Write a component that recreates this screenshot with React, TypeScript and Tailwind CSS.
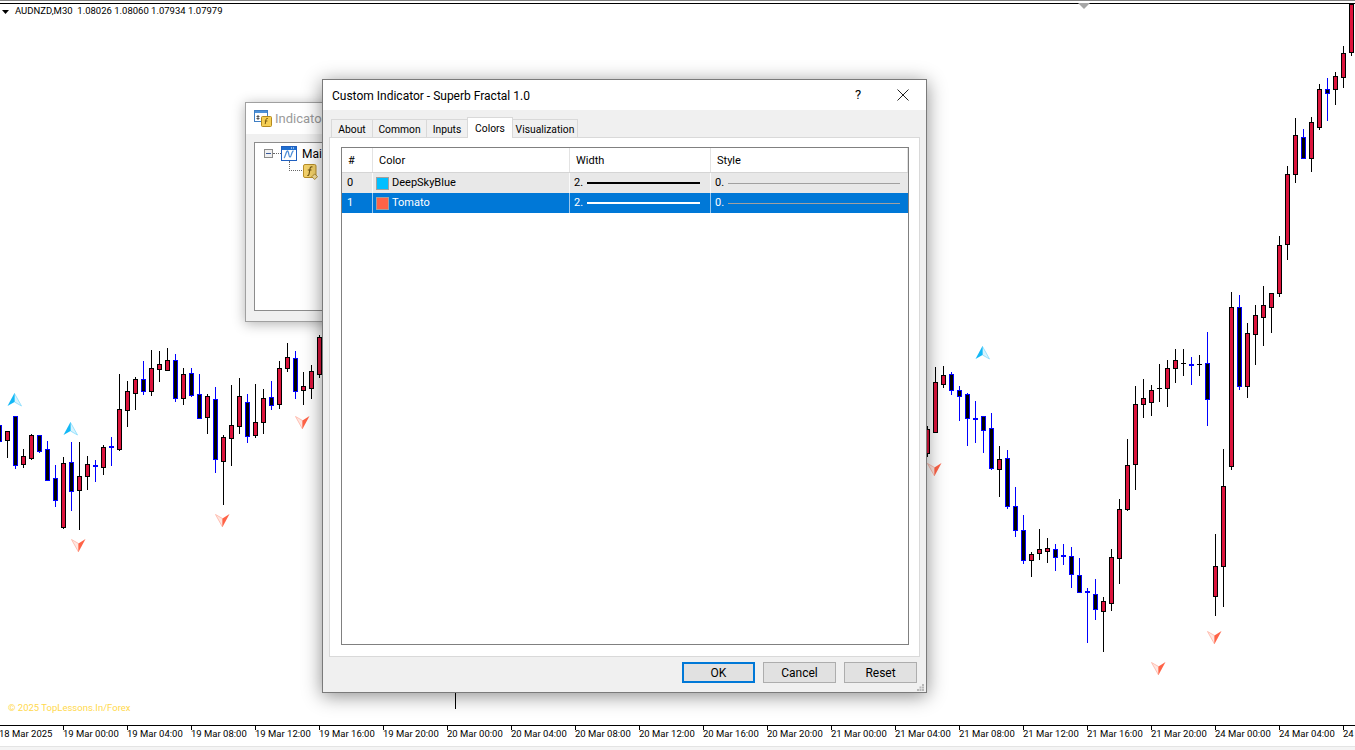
import { ReactNode } from "react";

type Kind = "r" | "b" | "k";
// kind, wick top, body top, body bottom, wick bottom (in 3x crop units, see addRun)
type Raw = [Kind, number, number, number, number];

interface Candle {
  kind: Kind;
  x: number;
  hi: number;
  top: number;
  bot: number;
  lo: number;
}

function addRun(startX: number, originY: number, rows: Raw[]): Candle[] {
  return rows.map(([kind, hi, top, bot, lo], i) => ({
    kind,
    x: startX + 8 * i,
    hi: Math.round(originY + hi / 3),
    top: Math.round(originY + top / 3),
    bot: Math.round(originY + bot / 3),
    lo: Math.round(originY + lo / 3),
  }));
}

const leftRun = addRun(-1, 330, [
  ["b", 285, 285, 332, 332],
  ["r", 303, 303, 329, 384],
  ["b", 258, 258, 404, 417],
  ["r", 357, 379, 401, 414],
  ["r", 312, 316, 383, 389],
  ["b", 316, 316, 362, 369],
  ["b", 333, 358, 449, 449],
  ["b", 405, 445, 509, 531],
  ["r", 381, 400, 590, 596],
  ["b", 336, 397, 482, 543],
  ["r", 336, 439, 479, 600],
  ["r", 378, 403, 437, 480],
  ["b", 390, 405, 413, 456],
  ["r", 346, 352, 410, 435],
  ["b", 321, 348, 356, 408],
  ["r", 132, 238, 356, 362],
  ["r", 153, 184, 239, 291],
  ["r", 141, 148, 188, 240],
  ["b", 93, 148, 182, 195],
  ["r", 60, 115, 182, 198],
  ["r", 63, 103, 116, 156],
  ["r", 54, 91, 119, 122],
  ["b", 72, 91, 203, 216],
  ["r", 114, 133, 203, 225],
  ["b", 114, 130, 194, 201],
  ["b", 132, 193, 263, 263],
  ["r", 193, 199, 260, 312],
  ["b", 171, 208, 386, 429],
  ["r", 316, 322, 392, 525],
  ["r", 165, 286, 323, 408],
  ["r", 144, 199, 287, 312],
  ["b", 192, 217, 317, 339],
  ["r", 162, 277, 314, 324],
  ["r", 177, 205, 275, 312],
  ["b", 153, 202, 224, 240],
  ["r", 93, 115, 223, 237],
  ["r", 39, 82, 113, 126],
  ["b", 63, 85, 182, 207],
  ["r", 126, 169, 179, 225],
  ["r", 105, 124, 173, 207],
  ["r", 15, 22, 131, 144],
]);

const midRun = addRun(927, 330, [
  ["r", 288, 298, 368, 380],
  ["r", 111, 157, 307, 307],
  ["r", 108, 136, 163, 173],
  ["b", 127, 133, 179, 194],
  ["b", 169, 181, 197, 272],
  ["b", 190, 193, 265, 347],
  ["b", 213, 265, 269, 339],
  ["b", 259, 259, 301, 369],
  ["b", 249, 295, 413, 419],
  ["r", 348, 388, 416, 500],
  ["b", 360, 385, 529, 536],
  ["b", 471, 529, 601, 620],
  ["b", 555, 601, 689, 701],
  ["r", 666, 673, 689, 740],
  ["r", 597, 658, 668, 690],
  ["r", 624, 655, 662, 698],
  ["b", 642, 658, 680, 722],
  ["b", 642, 676, 683, 705],
  ["b", 651, 679, 733, 773],
  ["b", 684, 736, 785, 789],
  ["b", 774, 784, 788, 938],
  ["b", 747, 793, 838, 869],
  ["r", 801, 814, 842, 965],
  ["r", 657, 682, 818, 842],
  ["r", 507, 538, 685, 761],
  ["r", 327, 406, 536, 542],
  ["r", 168, 223, 401, 479],
  ["r", 147, 205, 221, 263],
  ["r", 165, 181, 215, 257],
  ["k", 102, 175, 178, 215],
  ["r", 90, 115, 173, 230],
  ["r", 57, 91, 115, 158],
  ["k", 57, 99, 102, 137],
  ["b", 81, 102, 105, 165],
  ["k", 75, 102, 105, 137],
  ["b", 6, 100, 206, 287],
]);

const lowerRight = addRun(1215, 290, [
  ["r", 733, 829, 917, 977],
  ["r", 477, 589, 829, 950],
  ["r", 6, 52, 527, 539],
  ["b", 15, 52, 287, 300],
  ["r", 99, 130, 287, 323],
  ["r", 45, 76, 131, 224],
  ["r", -12, 46, 80, 167],
  ["r", 11, 8, 50, 128],
]);

const upperRight = addRun(1279, 0, [
  ["r", 708, 736, 878, 890],
  ["r", 498, 523, 731, 779],
  ["r", 354, 406, 523, 548],
  ["b", 387, 412, 473, 476],
  ["r", 351, 367, 475, 516],
  ["r", 252, 268, 380, 390],
  ["b", 234, 268, 278, 362],
  ["r", 216, 229, 266, 314],
  ["r", 138, 160, 230, 264],
  ["r", 12, 12, 157, 167],
]);

const candles: Candle[] = [
  ...leftRun,
  ...midRun,
  { kind: "k", x: 1199, hi: 355, top: 364, bot: 365, lo: 376 },
  ...lowerRight,
  ...upperRight,
  { kind: "k", x: 455, hi: 690, top: 690, bot: 690, lo: 709 },
];

const upArrows = [
  [7, 393],
  [63, 422],
  [975, 346],
];
const downArrows = [
  [71, 539],
  [215, 514],
  [295, 416],
  [927, 463],
  [1207, 631],
  [1151, 662],
];

const axisLabels = [
  "18 Mar 2025",
  ...["19", "20", "21"].flatMap((d) =>
    ["00:00", "04:00", "08:00", "12:00", "16:00", "20:00"].map((t) => `${d} Mar ${t}`),
  ),
  "24 Mar 00:00",
  "24 Mar 04:00",
  "24",
];

function CandleMark({ c }: { c: Candle }) {
  const line = c.kind === "r" || c.kind === "k" ? "#000000" : "#0000ff";
  const doji = c.bot - c.top <= 3;
  return (
    <g>
      <rect x={c.x} y={c.hi} width={1} height={Math.max(c.lo - c.hi, 1)} fill={line} />
      {doji && c.kind !== "r" ? (
        <rect x={c.x - 2} y={c.top} width={5} height={c.kind === "b" ? 2 : 1} fill={line} />
      ) : (
        <rect
          x={c.x - 1.5}
          y={c.top + 0.5}
          width={4}
          height={Math.max(c.bot - c.top, 1)}
          fill={c.kind === "r" ? "#dc143c" : "#000000"}
          stroke={line}
          strokeWidth={1}
        />
      )}
    </g>
  );
}

function Chart() {
  return (
    <svg width={1355} height={750} className="absolute left-0 top-0" shapeRendering="crispEdges">
      {candles.map((c, i) => (
        <CandleMark key={i} c={c} />
      ))}
      <g shapeRendering="auto">
        {upArrows.map(([x, y]) => (
          <g key={`${x}u`} transform={`translate(${x} ${y})`}>
            <polygon points="7.5,0.5 14.5,13 7.5,9" fill="#d9f4fe" stroke="#86dcfc" strokeWidth={0.8} />
            <polygon points="7.5,0 0.5,13 7.5,9" fill="#12b8f6" />
          </g>
        ))}
        {downArrows.map(([x, y]) => (
          <g key={`${x}d`} transform={`translate(${x} ${y})`}>
            <polygon points="0.5,0.5 7.5,13 7.5,4.5" fill="#ffe7e1" stroke="#ffb3a3" strokeWidth={0.8} />
            <polygon points="14.5,0 7.5,13 7.5,4.5" fill="#ff6347" />
          </g>
        ))}
      </g>
    </svg>
  );
}

function BackWindowIcon() {
  return (
    <svg width={18} height={17} viewBox="0 0 18 17">
      <rect x={0.5} y={0.5} width={13} height={11} fill="#fff" stroke="#3f7fc4" />
      <rect x={1} y={1} width={12} height={2} fill="#4f92d8" />
      <path d="M4 5v5M2.5 6.5h3M2.5 8.5h3" stroke="#555" strokeWidth={1} />
      <rect x={7.5} y={6.5} width={10} height={10} rx={1} fill="#f5cf55" stroke="#b58a1e" />
      <path d="M13.8 8.5c-1.4-.4-1.7.4-1.9 1.6l-.7 4M10.8 11h2.6" stroke="#7a5a10" strokeWidth={1} fill="none" />
    </svg>
  );
}

function MainChartIcon() {
  return (
    <svg width={17} height={15} viewBox="0 0 17 15">
      <rect x={0.5} y={0.5} width={15} height={14} fill="#fff" stroke="#1f5fbf" />
      <rect x={1} y={1} width={14} height={3} fill="#1f6fd0" />
      <path d="M10 2h1M12 2h1" stroke="#fff" />
      <path d="M3 12c1.500-1 2-7 3.500-7s1 6 2.500 6 1.500-6 3.500-6" stroke="#4f8fd8" strokeWidth={1.3} fill="none" />
    </svg>
  );
}

function FxIcon() {
  return (
    <svg width={15} height={16} viewBox="0 0 15 16">
      <rect x={0.5} y={0.5} width={12.500} height={13} rx={1.500} fill="#f4d26a" stroke="#b98f28" />
      <path d="M9.500 3c-1.800-.6-2.300.5-2.500 1.800l-1 5.500c-.2 1-.7 1.400-1.700 1.200M4.800 6h3.700" stroke="#6e5210" strokeWidth={1.100} fill="none" />
      <rect x={9.700} y={10.700} width={4} height={4} transform="rotate(45 11.700 12.700)" fill="#f8e3a0" stroke="#a8801f" strokeWidth={0.8} />
    </svg>
  );
}

function Tab({ label, w, active }: { label: string; w: string; active?: boolean }) {
  return active ? (
    <div className={`${w} h-[21px] border border-b-0 border-[#d9d9d9] bg-white flex items-start justify-center pt-[3px] text-[10.3px] relative z-10 -mb-px`}>
      {label}
    </div>
  ) : (
    <div className={`${w} h-[18px] border border-b-0 border-[#d9d9d9] bg-[#f0f0f0] flex items-center justify-center pt-[2px] text-[10.3px]`}>
      {label}
    </div>
  );
}

function HeaderCell({ w, children }: { w: string; children: ReactNode }) {
  return (
    <div className={`${w} shrink-0 h-full flex items-center pl-[6px] pt-[2px] border-r border-[#e3e3e3]`}>
      {children}
    </div>
  );
}

function ColorRow({
  idx,
  name,
  swatch,
  selected,
}: {
  idx: number;
  name: string;
  swatch: string;
  selected?: boolean;
}) {
  const sep = selected ? "border-r border-[#9cc7ec]" : "border-r border-[#fafafa]";
  return (
    <div className={`flex items-center ${selected ? "h-[20px] bg-[#0078d7] text-white" : "h-[20px] bg-[#e8e8e8] text-black"}`}>
      <div className={`w-[31px] shrink-0 h-full flex items-center pl-[5px] pt-px ${sep}`}>{idx}</div>
      <div className={`w-[197px] shrink-0 h-full flex items-center pl-[3px] gap-[3px] ${sep}`}>
        <span className={`w-[13px] h-[13px] border border-[#a0a0a0] ${swatch}`} />
        <span className="pt-px">{name}</span>
      </div>
      <div className={`w-[141px] shrink-0 h-full flex items-center pl-[4px] gap-[4px] ${sep}`}>
        <span className="w-[9px] pt-px">2.</span>
        <span className={`w-[113px] h-[2px] ${selected ? "bg-white" : "bg-black"}`} />
      </div>
      <div className="w-[197px] shrink-0 h-full flex items-center pl-[4px] gap-[4px]">
        <span className="w-[9px] pt-px">0.</span>
        <span className="w-[172px] h-px bg-[#a0a0a0]" />
      </div>
    </div>
  );
}

function DialogButton({ label, primary }: { label: string; primary?: boolean }) {
  return (
    <div
      className={`w-[73px] h-[21px] bg-[#e1e1e1] flex items-center justify-center text-[12px] ${
        primary ? "border-2 border-[#0078d7]" : "border border-[#adadad]"
      }`}
    >
      {label}
    </div>
  );
}

function BackWindow() {
  return (
    <div className="absolute left-[245px] top-[102px] w-[200px] h-[220px] border border-[#a0a0a0] bg-[#f0f0f0] shadow-[0_2px_12px_rgba(0,0,0,0.3)] flex flex-col">
      <div className="h-[31px] bg-white flex items-center pl-[8px] gap-[3px] text-[13px] text-[#9a9a9a]">
        <BackWindowIcon />
        <span>Indicators</span>
      </div>
      <div className="flex-1 px-[8px] pt-[8px] pb-[10px]">
        <div className="h-full border border-[#8c8c8c] bg-white pl-[9px] pt-[3px] text-[12px] text-black">
          <div className="flex items-center h-[15px]">
            <span className="w-[9px] h-[9px] border border-[#8a8a8a] bg-[#f0f0f0] flex items-center justify-center">
              <span className="w-[5px] h-px bg-[#3a5a9a]" />
            </span>
            <span className="w-[8px] border-t border-dotted border-[#666]" />
            <MainChartIcon />
            <span className="ml-[4px]">Main</span>
          </div>
          <div className="flex items-start ml-[25px] h-[18px]">
            <span className="w-[13px] h-[10px] border-l border-b border-dotted border-[#666]" />
            <span className="ml-[1px] mt-[3px]">
              <FxIcon />
            </span>
          </div>
        </div>
      </div>
    </div>
  );
}

function MainDialog() {
  return (
    <div className="absolute left-[322px] top-[79px] w-[605px] h-[614px] border border-[#7a7a7a] bg-[#f0f0f0] shadow-[0_3px_18px_rgba(0,0,0,0.45)] flex flex-col text-[11px] text-black">
      <div className="h-[30px] shrink-0 bg-white flex items-center pl-[9px] text-[12px]">
        <span className="flex-1 pt-[1px]">Custom Indicator - Superb Fractal 1.0</span>
        <span className="w-[12px] text-center text-[13px] mr-[33px]">?</span>
        <svg width={12} height={12} viewBox="0 0 12 12" className="mr-[17px]">
          <path d="M.5.5l11 11M11.500.5l-11 11" stroke="#222" strokeWidth={1} fill="none" />
        </svg>
      </div>
      <div className="flex-1 flex flex-col px-[6px] pt-[7px] pb-[4px]">
        <div className="flex items-end h-[20px] pl-[2px]">
          <Tab label="About" w="w-[42px]" />
          <Tab label="Common" w="w-[55px] -ml-px" />
          <Tab label="Inputs" w="w-[42px] -ml-px" />
          <Tab label="Colors" w="w-[46px] -ml-px" active />
          <Tab label="Visualization" w="w-[66px] -ml-px" />
        </div>
        <div className="h-[520px] border border-[#d9d9d9] bg-white pl-[11px] pr-[10px] pt-[9px] pb-[11px]">
          <div className="h-full border border-[#808080] bg-white">
            <div className="flex h-[25px] border-b border-[#d5d5d5]">
              <HeaderCell w="w-[31px]">#</HeaderCell>
              <HeaderCell w="w-[197px]">Color</HeaderCell>
              <HeaderCell w="w-[141px]">Width</HeaderCell>
              <HeaderCell w="w-[197px]">Style</HeaderCell>
            </div>
            <ColorRow idx={0} name="DeepSkyBlue" swatch="bg-[#00bfff]" />
            <ColorRow idx={1} name="Tomato" swatch="bg-[#ff6347]" selected />
          </div>
        </div>
        <div className="flex justify-end gap-[8px] pr-[3px] pt-[5px]">
          <DialogButton label="OK" primary />
          <DialogButton label="Cancel" />
          <DialogButton label="Reset" />
        </div>
      </div>
      <svg width={7} height={7} viewBox="0 0 7 7" className="absolute right-[2px] bottom-[1px]">
        <path d="M5 0h2v2H5zM2.500 2.500h2v2h-2zM5 2.500h2v2H5zM0 5h2v2H0zM2.500 5h2v2h-2zM5 5h2v2H5z" fill="#b8b8b8" />
      </svg>
    </div>
  );
}

export default function App() {
  return (
    <div className="relative w-[1355px] h-[750px] overflow-hidden bg-white flex flex-col font-['Roboto',sans-serif]">
      <Chart />

      <div className="relative shrink-0 h-[4px] border-t border-b border-[#000] border-t-[#808080]">
        <svg width={12} height={6} className="absolute left-[1078px] top-[2px]">
          <polygon points="0,0 12,0 6,6" fill="#a6a6a6" />
        </svg>
      </div>

      <div className="relative flex items-center h-[15px] pl-[2px] gap-[6px] text-[9.5px] text-black">
        <svg width={7} height={4}>
          <polygon points="0,0 7,0 3.500,4" fill="#000" />
        </svg>
        <span className="whitespace-pre">AUDNZD,M30  1.08026 1.08060 1.07934 1.07979</span>
      </div>

      <div className="flex-1" />

      <div className="relative h-[24px] pl-[8px] text-[9.5px] text-[#ffd94d]">
        © 2025 TopLessons.In/Forex
      </div>

      <div className="relative shrink-0 h-[21px] border-t border-black flex -ml-px bg-white">
        {axisLabels.map((label, i) => (
          <div key={label} className="w-[64px] shrink-0 text-[9.5px] leading-[12px] text-black whitespace-nowrap overflow-hidden">
            <div className={`h-[4px] w-px ${i === 0 ? "" : "bg-black"}`} />
            <div className="-mt-[2px]">{label}</div>
          </div>
        ))}
      </div>

      <div className="relative shrink-0 h-[4px] border-t border-[#e4e4e4] bg-[#f4f4f4]" />

      <BackWindow />
      <MainDialog />
    </div>
  );
}
